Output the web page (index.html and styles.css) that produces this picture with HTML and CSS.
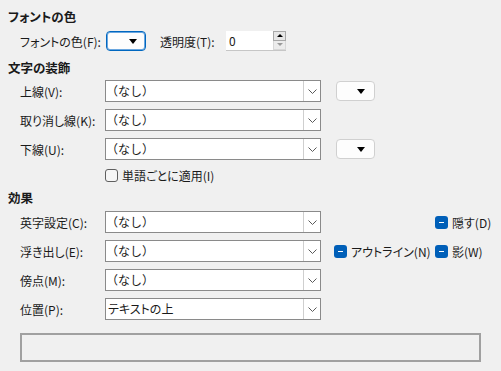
FILE: index.html
```html
<!DOCTYPE html>
<html lang="ja">
  <head>
    <meta charset="UTF-8" />
    <meta name="viewport" content="width=device-width, initial-scale=1.0" />
    <title>フォント</title>
    <link rel="stylesheet" href="styles.css">
  </head>
  <body>
    <div class="dialog">
      <div class="heading">フォントの色</div>
      <div class="row row-color">
        <span class="label label-color">フォントの色(F):</span>
        <button class="color-btn focused"><span class="tri"></span></button>
        <span class="label label-alpha">透明度(T):</span>
        <div class="spin">
          <span class="spin-value">0</span>
          <div class="spin-btns">
            <span class="spin-up"><span class="tri-up"></span></span>
            <span class="spin-down"><span class="tri-down"></span></span>
          </div>
        </div>
      </div>

      <div class="heading heading-deco">文字の装飾</div>
      <div class="rows rows-deco">
        <div class="row">
          <span class="label">上線(V):</span>
          <div class="combo"><span class="combo-text">（なし）</span><span class="combo-arrow"><svg width="9" height="5" viewBox="0 0 9 5"><polyline points="0.5,0.5 4.5,4.5 8.5,0.5" fill="none" stroke="#5a5a5a" stroke-width="1"/></svg></span></div>
          <button class="color-btn small"><span class="tri"></span></button>
        </div>
        <div class="row">
          <span class="label">取り消し線(K):</span>
          <div class="combo"><span class="combo-text">（なし）</span><span class="combo-arrow"><svg width="9" height="5" viewBox="0 0 9 5"><polyline points="0.5,0.5 4.5,4.5 8.5,0.5" fill="none" stroke="#5a5a5a" stroke-width="1"/></svg></span></div>
        </div>
        <div class="row">
          <span class="label">下線(U):</span>
          <div class="combo"><span class="combo-text">（なし）</span><span class="combo-arrow"><svg width="9" height="5" viewBox="0 0 9 5"><polyline points="0.5,0.5 4.5,4.5 8.5,0.5" fill="none" stroke="#5a5a5a" stroke-width="1"/></svg></span></div>
          <button class="color-btn small"><span class="tri"></span></button>
        </div>
      </div>
      <div class="check-row">
        <span class="checkbox"></span><span>単語ごとに適用(I)</span>
      </div>

      <div class="heading heading-effect">効果</div>
      <div class="rows rows-effect">
        <div class="row">
          <span class="label">英字設定(C):</span>
          <div class="combo"><span class="combo-text">（なし）</span><span class="combo-arrow"><svg width="9" height="5" viewBox="0 0 9 5"><polyline points="0.5,0.5 4.5,4.5 8.5,0.5" fill="none" stroke="#5a5a5a" stroke-width="1"/></svg></span></div>
          <div class="opts">
            <span class="opt"></span>
            <span class="opt"><span class="checkbox mixed"></span>隠す(D)</span>
          </div>
        </div>
        <div class="row">
          <span class="label">浮き出し(E):</span>
          <div class="combo"><span class="combo-text">（なし）</span><span class="combo-arrow"><svg width="9" height="5" viewBox="0 0 9 5"><polyline points="0.5,0.5 4.5,4.5 8.5,0.5" fill="none" stroke="#5a5a5a" stroke-width="1"/></svg></span></div>
          <div class="opts">
            <span class="opt"><span class="checkbox mixed"></span>アウトライン(N)</span>
            <span class="opt"><span class="checkbox mixed"></span>影(W)</span>
          </div>
        </div>
        <div class="row">
          <span class="label">傍点(M):</span>
          <div class="combo"><span class="combo-text">（なし）</span><span class="combo-arrow"><svg width="9" height="5" viewBox="0 0 9 5"><polyline points="0.5,0.5 4.5,4.5 8.5,0.5" fill="none" stroke="#5a5a5a" stroke-width="1"/></svg></span></div>
        </div>
        <div class="row">
          <span class="label">位置(P):</span>
          <div class="combo"><span class="combo-text plain">テキストの上</span><span class="combo-arrow"><svg width="9" height="5" viewBox="0 0 9 5"><polyline points="0.5,0.5 4.5,4.5 8.5,0.5" fill="none" stroke="#5a5a5a" stroke-width="1"/></svg></span></div>
        </div>
      </div>

      <div class="preview"></div>
    </div>
  </body>
</html>
```

FILE: styles.css
```css
body {
  margin: 0;
  background-color: #f0f0f0;
  color: #1a1a1a;
  font-family: "Noto Sans CJK JP", sans-serif;
  font-size: 12px;
  font-feature-settings: "palt";
  overflow: hidden;
}

.dialog {
  padding: 8px 8px 0 8px;
  width: 501px;
  height: 371px;
  box-sizing: border-box;
}

.heading {
  height: 17px;
  line-height: 17px;
  font-weight: bold;
  font-size: 12.5px;
}

.heading-deco {
  margin-top: 8px;
}

.heading-effect {
  margin-top: 6px;
}

.row {
  display: flex;
  align-items: center;
  height: 22px;
  padding-left: 12px;
}

.row-color {
  height: 20px;
  margin-top: 6px;
}

.label {
  width: 85px;
  flex-shrink: 0;
  white-space: nowrap;
}

.label-color {
  width: 86px;
}

.label-alpha {
  width: 66px;
  margin-left: 14px;
}

.rows {
  display: flex;
  flex-direction: column;
  gap: 7px;
}

.rows-deco {
  margin-top: 4px;
}

.rows-effect {
  margin-top: 5px;
}

/* combo box */
.combo {
  display: flex;
  width: 216px;
  height: 22px;
  box-sizing: border-box;
  border: 1px solid #8a8a8a;
  background: #ffffff;
  flex-shrink: 0;
}

.combo-text {
  flex: 1;
  line-height: 20px;
  padding-left: 0;
  font-feature-settings: normal;
}

.combo-text.plain {
  padding-left: 2px;
  font-feature-settings: "palt";
}

.combo-arrow {
  width: 17px;
  box-sizing: border-box;
  border-left: 1px solid #cfcfcf;
  display: flex;
  align-items: center;
  justify-content: center;
}

/* color buttons */
.color-btn {
  width: 40px;
  height: 20px;
  box-sizing: border-box;
  border: 1px solid #0067c0;
  border-radius: 4px;
  background: #fdfdfd;
  padding: 0;
  display: flex;
  align-items: center;
  justify-content: flex-end;
  padding-right: 8px;
  box-shadow: inset 0 0 0 1px #6aa6df;
}

.color-btn.small {
  width: 39px;
  margin-left: 15px;
  border-color: #d0d0d0;
  box-shadow: none;
  padding-right: 9px;
}

.tri {
  width: 0;
  height: 0;
  border-left: 4px solid transparent;
  border-right: 4px solid transparent;
  border-top: 5px solid #000000;
}

/* spin input */
.spin {
  display: flex;
  width: 60px;
  height: 20px;
  background: #ffffff;
  box-sizing: border-box;
  border-bottom: 1px solid #c6c6c6;
}

.spin-value {
  flex: 1;
  line-height: 19px;
  padding-left: 3px;
}

.spin-btns {
  display: flex;
  flex-direction: column;
  width: 13px;
  background: #f0f0f0;
}

.spin-up,
.spin-down {
  height: 10px;
  box-sizing: border-box;
  display: flex;
  align-items: center;
  justify-content: center;
}

.spin-up {
  border: 1px solid #a8a8a8;
  background: #e6e6e6;
}

.spin-down {
  border: 1px solid #d8d8d8;
  border-top: none;
  background: #ececec;
}

.tri-up {
  width: 0;
  height: 0;
  border-left: 3px solid transparent;
  border-right: 3px solid transparent;
  border-bottom: 3px solid #000000;
}

.tri-down {
  width: 0;
  height: 0;
  border-left: 3px solid transparent;
  border-right: 3px solid transparent;
  border-top: 3px solid #9a9a9a;
}

/* checkboxes */
.check-row {
  display: flex;
  align-items: center;
  height: 16px;
  margin-top: 7px;
  padding-left: 97px;
}

.checkbox {
  width: 13px;
  height: 13px;
  box-sizing: border-box;
  border: 1px solid #5f5f5f;
  border-radius: 3px;
  background: #f6f6f6;
  margin-right: 4px;
  flex-shrink: 0;
  position: relative;
}

.checkbox.mixed {
  border: none;
  background: #005fb8;
}

.checkbox.mixed::after {
  content: "";
  position: absolute;
  left: 4px;
  top: 6px;
  width: 5px;
  height: 1px;
  background: #ffffff;
}

.opts {
  display: flex;
  margin-left: 13px;
}

.opt {
  display: flex;
  align-items: center;
  width: 101px;
  white-space: nowrap;
}

.opt:last-child {
  width: auto;
}

.preview {
  margin-top: 13px;
  margin-left: 12px;
  width: 461px;
  height: 29px;
  box-sizing: border-box;
  border: 2px solid #a0a0a0;
  background: #f0f0f0;
}
```
